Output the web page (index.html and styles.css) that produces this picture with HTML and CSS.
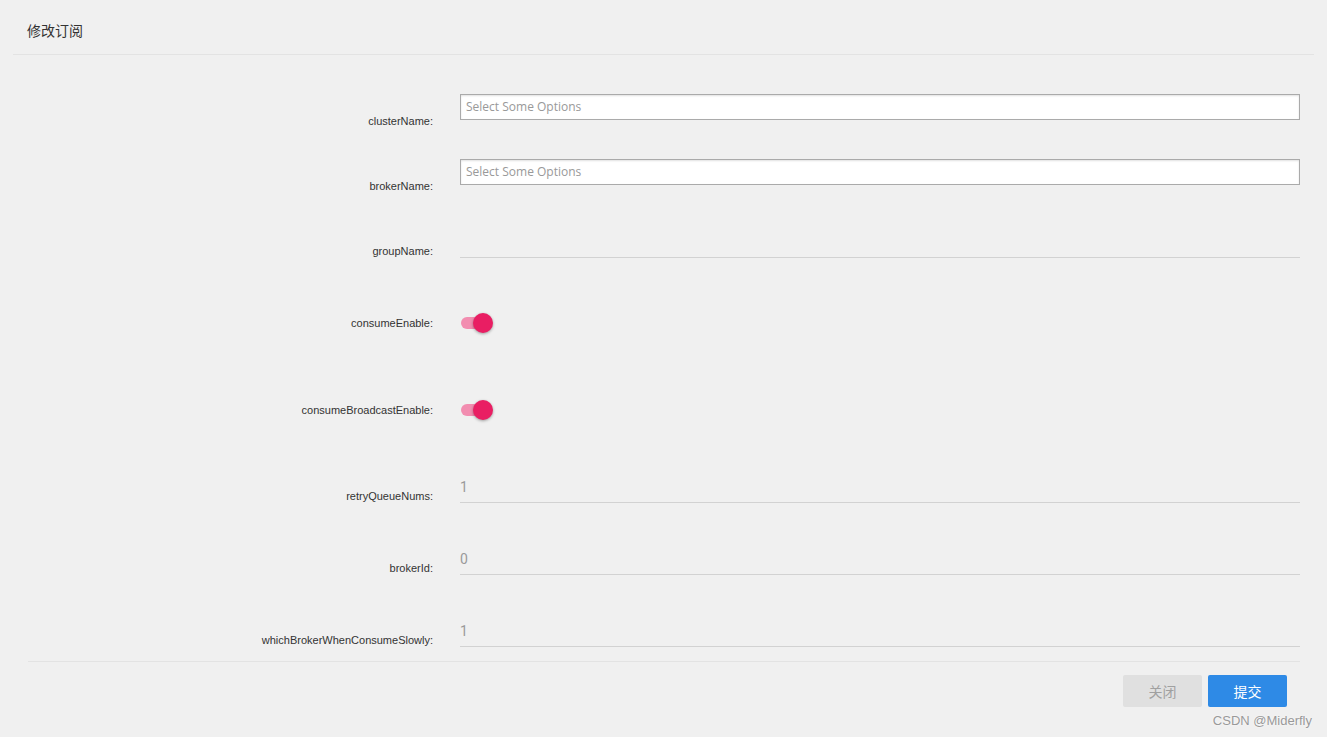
FILE: index.html
```html
<!DOCTYPE html>
<html lang="zh-CN">
<head>
    <meta charset="UTF-8">
    <title>修改订阅</title>
    <link rel="stylesheet" href="styles.css">
</head>
<body>
    <div class="dialog">
        <div class="dialog-head">修改订阅</div>
        <div class="dialog-body">
            <div class="row row-1">
                <label class="row-label">clusterName:</label>
                <div class="chosen"><span class="chosen-ph">Select Some Options</span></div>
            </div>
            <div class="row row-2">
                <label class="row-label">brokerName:</label>
                <div class="chosen"><span class="chosen-ph">Select Some Options</span></div>
            </div>
            <div class="row row-3">
                <label class="row-label">groupName:</label>
                <input class="field" type="text" value="">
            </div>
            <div class="row row-4">
                <label class="row-label switch-label">consumeEnable:</label>
                <span class="switch"><span class="switch-track"></span><span class="switch-knob"></span></span>
            </div>
            <div class="row row-5">
                <label class="row-label switch-label">consumeBroadcastEnable:</label>
                <span class="switch"><span class="switch-track"></span><span class="switch-knob"></span></span>
            </div>
            <div class="row row-6">
                <label class="row-label">retryQueueNums:</label>
                <input class="field" type="text" value="1">
            </div>
            <div class="row row-7">
                <label class="row-label">brokerId:</label>
                <input class="field" type="text" value="0">
            </div>
            <div class="row row-8">
                <label class="row-label">whichBrokerWhenConsumeSlowly:</label>
                <input class="field" type="text" value="1">
            </div>
        </div>
        <div class="dialog-foot">
            <button class="btn btn-close">关闭</button>
            <button class="btn btn-submit">提交</button>
        </div>
    </div>
    <div class="watermark">CSDN @Miderfly</div>
</body>
</html>
```

FILE: styles.css
```css
*{
    padding:0;
    margin:0;
    box-sizing: border-box;
}
html,body{
    height:100%;
}
body{
    background:#f0f0f0;
    font-family: "Liberation Sans", Arial, "Noto Sans CJK SC", sans-serif;
    color:#333;
    overflow:hidden;
}
.dialog-head{
    margin:0 13px;
    padding:0 14px;
    height:55px;
    line-height:60px;
    font-size:14px;
    color:#333;
    border-bottom:1px solid #e3e3e3;
    font-family: "Noto Sans CJK SC", sans-serif;
}
.dialog-body{
    padding-bottom:14px;
}
.row{
    display:flex;
    align-items:flex-end;
}
.row-label{
    width:433px;
    flex:none;
    text-align:right;
    font-size:11px;
    line-height:14px;
    color:#333;
    margin-right:27px;
}
.switch-label{
    line-height:20px;
}
.row-1{ margin-top:39px; }
.row-2{ margin-top:31px; }
.row-3{ margin-top:35px; }
.row-4{ margin-top:55px; }
.row-5{ margin-top:67px; }
.row-6{ margin-top:53px; }
.row-7{ margin-top:42px; }
.row-8{ margin-top:42px; }

.chosen{
    width:840px;
    height:26px;
    margin-bottom:8px;
    background:#fff;
    border:1px solid #aaa;
    box-shadow: inset 0 1px 2px rgba(0,0,0,.12);
    padding-left:5px;
    font-family: "Open Sans", sans-serif;
    font-size:12px;
    line-height:23px;
    color:#999;
}
.field{
    width:840px;
    height:30px;
    border:none;
    border-bottom:1px solid #d2d2d2;
    background:transparent;
    outline:none;
    font-family: Roboto, sans-serif;
    font-size:14px;
    color:#9a9a9a;
    padding:0 0 2px 0;
}
.switch{
    position:relative;
    display:inline-block;
    width:34px;
    height:20px;
}
.switch-track{
    position:absolute;
    left:1px;
    top:4px;
    width:30px;
    height:12px;
    border-radius:6px;
    background:#f28db0;
}
.switch-knob{
    position:absolute;
    left:13px;
    top:0;
    width:20px;
    height:20px;
    border-radius:50%;
    background:#e91e63;
    box-shadow: 0 1px 3px rgba(0,0,0,.35);
}
.dialog-foot{
    margin-left:28px;
    width:1272px;
    border-top:1px solid #e3e3e3;
    padding:13px 13px 0 0;
    display:flex;
    justify-content:flex-end;
    gap:6px;
}
.btn{
    width:79px;
    height:32px;
    border:none;
    border-radius:2px;
    font-family: "Noto Sans CJK SC", sans-serif;
    font-size:14px;
}
.btn-close{
    background:#e0e0e0;
    color:#a0a0a0;
}
.btn-submit{
    background:#2e8ae6;
    color:#fff;
}
.watermark{
    position:absolute;
    right:15px;
    bottom:9px;
    font-size:13px;
    color:#999;
    text-shadow: 0 0 2px #fff;
}
```
